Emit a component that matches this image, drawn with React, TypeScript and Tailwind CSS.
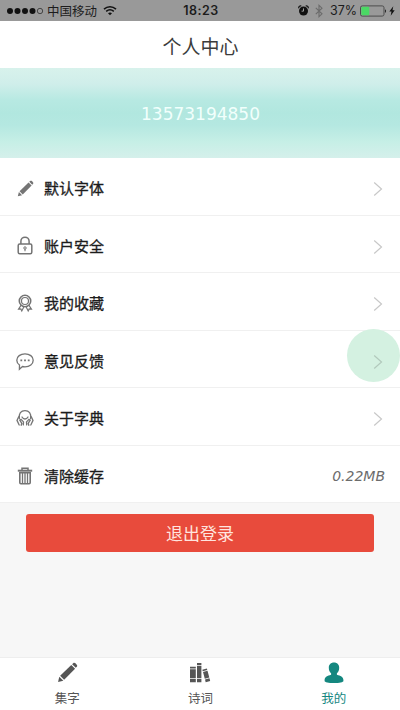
import React from 'react';

const PencilIcon = ({ className }: { className?: string }) => (
  <svg viewBox="0 0 20 20" className={className} fill="currentColor">
    <path d="M1 19l1.200-5 3.800 3.800z" />
    <path d="M3 13.100L13.600 2.900l3.600 3.600L6.800 17z" />
    <path d="M14.400 2.100l1-.9c.7-.6 1.600-.5 2.200.1l1.200 1.200c.6.6.6 1.500 0 2.100l-.9.9z" />
  </svg>
);

const LockIcon = () => (
  <svg viewBox="0 0 18 20" className="w-[18px] h-5" fill="none" stroke="currentColor" strokeWidth="1.500">
    <rect x="2.200" y="8" width="13.600" height="9.800" rx="1.500" />
    <path d="M4.900 8V5.300a4.100 4.100 0 0 1 8.200 0V8" />
    <circle cx="9" cy="12" r="1.200" strokeWidth="1" />
    <path d="M9 13v2.200" strokeWidth="1.100" />
  </svg>
);

const MedalIcon = () => (
  <svg viewBox="0 0 18 20" className="w-[18px] h-5" fill="none" stroke="currentColor" strokeWidth="1.200">
    <circle cx="9" cy="8" r="5.700" strokeWidth="1.600" />
    <circle cx="9" cy="8" r="3.500" />
    <path d="M5.200 12.200L2.600 16l2.200-.1 1 2 2-4M12.800 12.200l2.600 3.800-2.200-.1-1 2-2-4" />
  </svg>
);

const ChatIcon = () => (
  <svg viewBox="0 0 18 20" className="w-[18px] h-5" fill="none" stroke="currentColor" strokeWidth="1.300">
    <path d="M9 2.800c4.600 0 8.200 2.700 8.200 6.500S13.600 15.800 9 15.800c-.9 0-1.700-.1-2.500-.3l-3.100 2.700.1-4.200C1.800 12.900.8 11.200.8 9.300.8 5.500 4.400 2.800 9 2.800z" />
    <path d="M4.400 9.400h1.800M8.100 9.400h1.800M11.800 9.400h1.800" strokeWidth="1.700" />
  </svg>
);

const HandsIcon = () => (
  <svg viewBox="0 0 18 20" className="w-[18px] h-5" fill="none" stroke="currentColor" strokeWidth="1.300" strokeLinecap="round">
    <path d="M3.300 10.500C2.600 5.500 5 2.700 9 2.700s6.400 2.800 5.700 7.800" />
    <path d="M6 9c.8 1.400 1.800 2 3 2s2.200-.6 3-2" />
    <path d="M2.700 8.800L1 12.400l2.200 4.600M5.200 17.300l.6-2-2-3.200 1.200-.8 2.500 2.600-.2 3" />
    <path d="M15.300 8.800l1.700 3.600-2.200 4.600M12.800 17.300l-.6-2 2-3.200-1.200-.8-2.500 2.600.2 3" />
  </svg>
);

const TrashIcon = () => (
  <svg viewBox="0 0 18 20" className="w-[18px] h-5" fill="none" stroke="currentColor">
    <path d="M1.800 4.700h14.400" strokeWidth="2" />
    <path d="M6 4V2.200h6V4" strokeWidth="1.500" />
    <path d="M3.800 6.700v9.900c0 .7.400 1.100 1.100 1.100h8.200c.7 0 1.100-.4 1.100-1.100V6.700z" strokeWidth="1.600" />
    <path d="M6.500 7v10M9 7v10M11.500 7v10" strokeWidth="1.300" />
  </svg>
);

const BooksIcon = () => (
  <svg viewBox="0 0 22 22" className="w-[22px] h-[22px]" fill="currentColor">
    <path d="M1 4.800h5.800v1.700H1zM1 7.200h5.800v9H1zM1 16.900h5.800v3.300H1z" />
    <path d="M8 1h4.400v2.200H8zM8 3.900h4.400v12.300H8zM8 16.900h4.400v3.300H8z" />
    <path d="M13.300 7.700l4.500-1.200.5 1.600-4.500 1.200zM14 10l4.500-1.200 1.800 6.800-4.500 1.200zM16 17.500l4.500-1.200.7 2.700-4.500 1.200z" />
  </svg>
);

const UserIcon = () => (
  <svg viewBox="0 0 22 22" className="w-[22px] h-[22px]" fill="currentColor">
    <path d="M11 .6c-3.200 0-5.200 2.100-5.200 5.200 0 2.500.8 4.200 2.300 5.400v1.500C4.600 13.700 1.600 14.900 1.600 18v1c0 1.300 4 2.100 9.400 2.100s9.400-.8 9.400-2.100v-1c0-3.100-3-4.300-6.500-5.300v-1.500c1.500-1.200 2.300-2.900 2.300-5.400C16.200 2.700 14.200.6 11 .6z" />
  </svg>
);

const items = [
  { label: '默认字体', icon: <PencilIcon className="w-[17px] h-[17px]" /> },
  { label: '账户安全', icon: <LockIcon /> },
  { label: '我的收藏', icon: <MedalIcon /> },
  { label: '意见反馈', icon: <ChatIcon />, touched: true },
  { label: '关于字典', icon: <HandsIcon /> },
  { label: '清除缓存', icon: <TrashIcon />, value: '0.22MB' },
];

const tabs = [
  { label: '集字', icon: <PencilIcon className="w-[21px] h-[21px]" /> },
  { label: '诗词', icon: <BooksIcon /> },
  { label: '我的', icon: <UserIcon />, active: true },
];

const StatusBar = () => (
  <div className="h-[21px] shrink-0 bg-[#999999] grid grid-cols-[1fr_auto_1fr] items-center text-[#1c1c1c]">
    <div className="flex items-center pl-[7px]">
      <svg viewBox="0 0 37 8" className="w-[37px] h-2" fill="#111">
        <circle cx="3" cy="4" r="3" />
        <circle cx="10.500" cy="4" r="3" />
        <circle cx="18" cy="4" r="3" />
        <circle cx="25.500" cy="4" r="3" />
        <circle cx="33" cy="4" r="2.700" fill="none" stroke="#222" strokeWidth=".7" />
      </svg>
      <span className="ml-[3px] text-[12.500px] leading-5">中国移动</span>
      <svg viewBox="0 0 14 11" className="ml-[6px] w-[14px] h-[11px]" fill="none" stroke="#111" strokeWidth="1.600">
        <path d="M1 4.100c3.500-3.200 8.500-3.200 12 0M3.200 6.400c2.300-2 5.300-2 7.600 0" />
        <path d="M7 10.200L5 8.200c1.200-1 2.800-1 4 0z" fill="#111" stroke="none" />
      </svg>
    </div>
    <span className="font-['Inter'] font-semibold text-[12.500px] leading-5 tracking-[0.5px] pt-px pl-[2px]">18:23</span>
    <div className="flex items-center justify-end pr-[5px]">
      <svg viewBox="0 0 12 12" className="w-[11px] h-[11px]" fill="#111">
        <circle cx="6" cy="6.500" r="4.900" />
        <path d="M.9 3.600C.4 2 1.900.6 3.600 1.100M11.100 3.600C11.600 2 10.100.6 8.400 1.100" fill="none" stroke="#111" strokeWidth="1.300" />
        <path d="M6 3.700v3H3.900" fill="none" stroke="#aaa" strokeWidth="1" />
      </svg>
      <svg viewBox="0 0 8 14" className="ml-[6px] w-2 h-[14px]" fill="none" stroke="#6b6b6b" strokeWidth="1.100">
        <path d="M.8 3.800l6.200 6L4 12.700V1.300l3 2.900-6.200 6" />
      </svg>
      <span className="ml-[7px] font-['Inter'] text-[12.500px] leading-5 pt-px">37%</span>
      <svg viewBox="0 0 28 12" className="ml-[3px] w-7 h-3">
        <rect x=".5" y=".9" width="23.500" height="10.200" rx="1.800" fill="none" stroke="#444" strokeWidth=".9" />
        <rect x="1.300" y="1.700" width="8" height="8.600" rx="1" fill="#4bd964" />
        <path d="M25 4.200c1.400.4 1.400 3.200 0 3.600z" fill="#222" />
      </svg>
      <svg viewBox="0 0 6 10" className="ml-px w-[6px] h-[10px]" fill="#111">
        <path d="M4.300.3L.3 5.500h2.200L1.700 9.700l4-5.500H3.500z" />
      </svg>
    </div>
  </div>
);

const App = () => {
  return (
    <div className="w-[400px] h-[710px] flex flex-col overflow-hidden bg-[#f7f7f7] font-['Noto_Sans_CJK_SC',sans-serif]">
      <StatusBar />
      <header className="h-[47px] shrink-0 bg-white flex items-center justify-center pt-[2px] pl-px">
        <h1 className="text-[19px] font-normal leading-7 text-[#3c3c3c]">个人中心</h1>
      </header>

      <div className="h-[90px] shrink-0 flex items-center justify-center pt-[2px] pl-px bg-[linear-gradient(to_bottom,#d8f2ec_0%,#cfeeea_18%,#b7e9e2_36%,#b1e7df_50%,#b5e8e1_64%,#c6efe6_82%,#d5f0eb_100%)]">
        <span className="font-['DejaVu_Sans',sans-serif] text-[17px] leading-6 text-[#f1fffc]">13573194850</span>
      </div>

      <ul className="bg-white shrink-0">
        {items.map((item) => (
          <li key={item.label} className="h-[57.500px] flex items-center border-b border-[#f0f0f0] pl-4 pr-[15px] pt-[4px]">
            <span className="w-[18px] mr-[10px] flex justify-center text-[#747474]">{item.icon}</span>
            <span className="flex-1 text-[15px] leading-6 text-[#1c1c1c] [-webkit-text-stroke:0.3px_#1c1c1c]">{item.label}</span>
            {item.value ? (
              <span className="font-['DejaVu_Sans',sans-serif] italic text-[14px] leading-5 text-[#6c6c6c] pt-px">{item.value}</span>
            ) : (
              <span className="relative mr-[2px]">
                {item.touched && (
                  <span className="absolute -left-[26px] -top-[23px] w-[53px] h-[53px] rounded-full bg-[#d4f1e1]" />
                )}
                <svg viewBox="0 0 10 16" className="relative block mt-[2px] w-[10px] h-4" fill="none" stroke={item.touched ? '#b2c9bc' : '#c8c8c8'} strokeWidth="1.200">
                  <path d="M1.200 1.500L8.500 8l-7.300 6.500" />
                </svg>
              </span>
            )}
          </li>
        ))}
      </ul>

      <div className="flex-1 px-[26px] pt-[11px]">
        <button className="block w-full h-[38px] rounded-[3px] bg-[#e84b3c] text-[17px] leading-[38px] text-[#ffe4df]">
          退出登录
        </button>
      </div>

      <nav className="h-[53px] shrink-0 bg-white border-t border-[#eeeeee] grid grid-cols-3">
        {tabs.map((tab) => (
          <div
            key={tab.label}
            className={`flex flex-col items-center pt-[3px] pl-px ${tab.active ? 'text-[#14877f]' : 'text-[#555555]'}`}
          >
            <span className="h-[23px] flex items-center">{tab.icon}</span>
            <span className="mt-[4px] text-[12.500px] leading-5">{tab.label}</span>
          </div>
        ))}
      </nav>
    </div>
  );
};

export default App;
